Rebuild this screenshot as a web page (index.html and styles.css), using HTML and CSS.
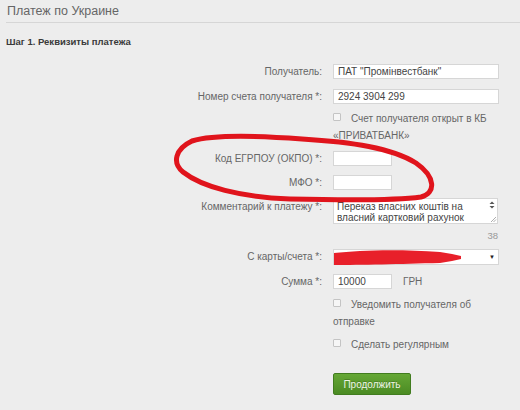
FILE: index.html
```html
<!DOCTYPE html>
<html lang="ru">
<head>
<meta charset="utf-8">
<title>Платеж по Украине</title>
<link rel="stylesheet" href="styles.css">
</head>
<body>
<div class="page">
  <h1 class="title">Платеж по Украине</h1>
  <h2 class="step">Шаг 1. Реквизиты платежа</h2>
  <div class="form">
    <div class="row r1">
      <label class="lbl">Получатель:</label>
      <div class="ctl"><div class="field wide">ПАТ "Промінвестбанк"</div></div>
    </div>
    <div class="row r2">
      <label class="lbl">Номер счета получателя *:</label>
      <div class="ctl"><div class="field wide">2924 3904 299</div></div>
    </div>
    <div class="row r3">
      <div class="lbl"></div>
      <div class="ctl check"><span class="box"></span><span class="ctext">Счет получателя открыт в КБ</span><br>«ПРИВАТБАНК»</div>
    </div>
    <div class="row r4">
      <label class="lbl">Код ЕГРПОУ (ОКПО) *:</label>
      <div class="ctl"><div class="field short"></div></div>
    </div>
    <div class="row r5">
      <label class="lbl">МФО *:</label>
      <div class="ctl"><div class="field short"></div></div>
    </div>
    <div class="row r6">
      <label class="lbl lbl-top">Комментарий к платежу *:</label>
      <div class="ctl">
        <div class="area">
          <div class="area-text">Переказ власних коштів на<br>власний картковий рахунок</div>
          <svg class="area-bar" width="10" height="24" viewBox="0 0 10 24">
            <path d="M2.5 5 L5 2.5 L7.5 5 Z" fill="#555"/>
            <path d="M2.5 7 L5 9.5 L7.5 7 Z" fill="#555"/>
            <path d="M9 18 L4 23 M9 20.5 L6.5 23" stroke="#999" stroke-width="0.8"/>
          </svg>
        </div>
      </div>
    </div>
    <div class="row r7">
      <div class="lbl"></div>
      <div class="ctl counter">38</div>
    </div>
    <div class="row r8">
      <label class="lbl">С карты/счета *:</label>
      <div class="ctl"><div class="field wide select"><span class="arrow">▼</span></div></div>
    </div>
    <div class="row r9">
      <label class="lbl">Сумма *:</label>
      <div class="ctl amount"><div class="field short">10000</div><span class="cur">ГРН</span></div>
    </div>
    <div class="row r10">
      <div class="lbl"></div>
      <div class="ctl check"><span class="box"></span><span class="ctext">Уведомить получателя об</span><br>отправке</div>
    </div>
    <div class="row r11">
      <div class="lbl"></div>
      <div class="ctl check"><span class="box"></span><span class="ctext">Сделать регулярным</span></div>
    </div>
    <div class="row r12">
      <div class="lbl"></div>
      <div class="ctl"><button class="btn" type="button">Продолжить</button></div>
    </div>
  </div>
  <svg class="marks" width="520" height="410" viewBox="0 0 520 410">
    <path d="M192,141 C215,134 262,136 302,139 C352,142 392,148 416,163 C436,177 436,193 421,197 C392,201 332,200 290,199 C240,197 202,187 183,172 C172,163 175,149 192,141 Z" fill="none" stroke="#e0141c" stroke-width="5" stroke-linejoin="round"/>
    <path d="M334,253 C360,250 400,249 440,252 L452,254 L461,256 L461,259 L452,261 L440,263 C400,264 360,265 334,265 Z" fill="#e8202a"/>
  </svg>
</div>
</body>
</html>
```
FILE: styles.css
```css
html, body {
  margin: 0;
  padding: 0;
}
body {
  background: #ededed;
  font-family: "Liberation Sans", Arial, sans-serif;
  color: #666;
}
.page {
  position: relative;
  width: 520px;
  height: 410px;
  overflow: hidden;
}
.title {
  margin: 0 0 0 6px;
  padding: 4px 0 3px 1px;
  font-size: 12.5px;
  line-height: 15px;
  font-weight: normal;
  color: #666;
  border-bottom: 1px solid #d6d6d6;
}
.step {
  margin: 13px 0 0 6px;
  font-size: 9.5px;
  line-height: 12px;
  font-weight: bold;
  color: #3a3a3a;
}
.form {
  display: flex;
  flex-direction: column;
}
.row {
  display: grid;
  grid-template-columns: 322px 166px;
  column-gap: 11px;
}
.r1 { margin-top: 16px; }
.r2 { margin-top: 10px; }
.r3 { margin-top: 6px; }
.r4 { margin-top: 7px; }
.r5 { margin-top: 9px; }
.r6 { margin-top: 8px; }
.r7 { margin-top: 6px; }
.r8 { margin-top: 7px; }
.r9 { margin-top: 9px; }
.r10 { margin-top: 7px; }
.r11 { margin-top: 6px; }
.r12 { margin-top: 20px; }
.lbl {
  text-align: right;
  font-size: 10px;
  line-height: 15px;
  color: #666;
}
.lbl-top {
  padding-top: 1px;
}
.field {
  box-sizing: border-box;
  height: 15px;
  background: #fff;
  border: 1px solid #d6d6d6;
  font-size: 10px;
  line-height: 13px;
  padding: 0 4px;
  color: #444;
}
.wide { width: 166px; }
.short { width: 59px; }
.select {
  position: relative;
  height: 16px;
}
.arrow {
  position: absolute;
  right: 3px;
  top: 0;
  font-size: 6px;
  line-height: 14px;
  color: #222;
}
.check {
  font-size: 10px;
  line-height: 17px;
  color: #666;
}
.box {
  display: inline-block;
  box-sizing: border-box;
  width: 8px;
  height: 8px;
  border: 1px solid #c4c4c4;
  border-radius: 1px;
  background: #f6f6f6;
  margin-right: 10px;
  vertical-align: 1px;
}
.area {
  box-sizing: border-box;
  width: 165px;
  height: 26px;
  background: #fff;
  border: 1px solid #d6d6d6;
  display: flex;
  justify-content: space-between;
}
.area-text {
  font-size: 10px;
  line-height: 10.5px;
  padding: 3px 0 0 3px;
  color: #444;
}
.area-bar {
  display: block;
}
.counter {
  text-align: right;
  font-size: 9.5px;
  line-height: 12px;
  color: #999;
  padding-right: 1px;
}
.amount {
  display: flex;
  align-items: center;
  gap: 11px;
}
.cur {
  font-size: 10px;
  color: #666;
}
.btn {
  width: 78px;
  height: 22px;
  padding: 0;
  border: 1px solid #417c1f;
  border-radius: 2px;
  background: linear-gradient(#65a735, #4b8b23);
  color: #eef5e6;
  font-family: "Liberation Sans", Arial, sans-serif;
  font-size: 10px;
  text-shadow: 0 -1px 0 rgba(0,0,0,0.2);
}
.marks {
  position: absolute;
  left: 0;
  top: 0;
  pointer-events: none;
}
```
